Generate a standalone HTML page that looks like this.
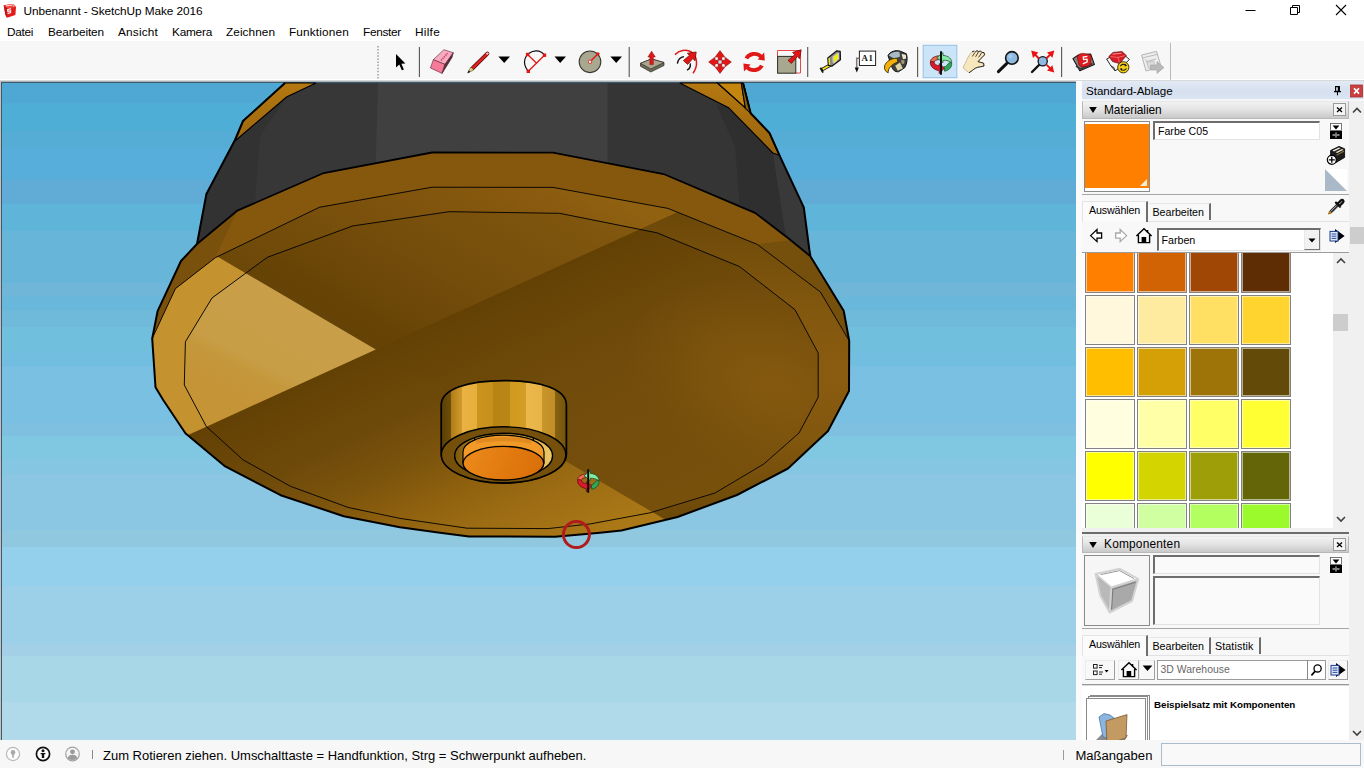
<!DOCTYPE html>
<html lang="de">
<head>
<meta charset="utf-8">
<title>Unbenannt - SketchUp Make 2016</title>
<style>
*{box-sizing:border-box;margin:0;padding:0}
html,body{width:1364px;height:768px;overflow:hidden;background:#fff}
body{position:relative;font-family:"Liberation Sans",sans-serif;font-size:12px;color:#000}
.abs{position:absolute}
.t{position:absolute;white-space:nowrap;line-height:1}
#titlebar{left:0;top:0;width:1364px;height:22px;background:#fff}
#menubar{left:0;top:22px;width:1364px;height:19px;background:#fff}
#toolbar{left:0;top:41px;width:1364px;height:40px;background:#f7f7f7;border-bottom:1px solid #d6d8d9;box-shadow:inset 0 -1px 0 #fff}
.m{top:5px;font-size:11.8px}
#viewport{left:0;top:81px;width:1076px;height:659px;background:#5f6a70;overflow:hidden}
#statusbar{left:0;top:740px;width:1364px;height:28px;background:#f7f7f7}
#side{left:1076px;top:81px;width:288px;height:659px;background:#f4f4f4;overflow:hidden}
.hdr{position:absolute;left:6px;width:267px;height:17px;background:linear-gradient(#f2f2f2,#e4e4e4 45%,#c9c9c9);border:1px solid #b8b8b8;border-top-color:#e8e8e8}
.fld{position:absolute;background:#fff;border:1px solid #e3e3e3;border-top:2px solid #6d6d6d;border-left:2px solid #6d6d6d}
.sw{position:absolute;width:50px;height:50px;border:1px solid #828282;box-shadow:inset 0 0 0 1px rgba(255,255,255,.55)}
.tab{position:absolute;font-size:10.6px;white-space:nowrap}
</style>
</head>
<body>
<div id="titlebar" class="abs">
<svg class="abs" style="left:3px;top:3px" width="17" height="17" viewBox="0 0 17 17">
<path d="M0.7 2.3 L9.8 1 L13 4 L12.4 12 L4 14.8 L2.3 11.5 Z" fill="#e21a1a"/>
<path d="M0.7 2.3 L9.8 1 L13 4 L4.4 5.4 Z" fill="#f04a44"/>
<path d="M0.7 2.3 L4.4 5.4 L4 14.8 L2.3 11.5 Z" fill="#c41212"/>
<path d="M3 2.9 L9.4 2 L11 3.5" stroke="#fff" stroke-width="0.9" fill="none" opacity=".85"/>
<path d="M8.2 5.6 L4.6 6.6 L4.8 8.4 L7.6 7.8 L7.6 9.6 L4.6 10.6" stroke="#fff" stroke-width="1.2" fill="none" opacity=".9"/>
</svg>
<span class="t" style="left:23.5px;top:5.5px;font-size:11.8px;letter-spacing:-0.07px">Unbenannt - SketchUp Make 2016</span>
<svg class="abs" style="left:1240px;top:0" width="124" height="22" viewBox="0 0 124 22">
<path d="M5.5 10.5 H15.5" stroke="#000" stroke-width="1" fill="none"/>
<path d="M50.5 7.5 H57.5 V14.5 H50.5 Z M52.5 7.5 V5.5 H59.5 V12.5 H57.5" stroke="#000" stroke-width="1" fill="none"/>
<path d="M96 5 L106 15 M106 5 L96 15" stroke="#000" stroke-width="1.1" fill="none"/>
</svg>
</div>

<div id="menubar" class="abs">
<span class="t m" style="left:7px;letter-spacing:-0.31px">Datei</span>
<span class="t m" style="left:48px;letter-spacing:-0.11px">Bearbeiten</span>
<span class="t m" style="left:118px;letter-spacing:0.19px">Ansicht</span>
<span class="t m" style="left:172px;letter-spacing:-0.22px">Kamera</span>
<span class="t m" style="left:226px;letter-spacing:0.06px">Zeichnen</span>
<span class="t m" style="left:289px;letter-spacing:0.16px">Funktionen</span>
<span class="t m" style="left:363px;letter-spacing:-0.29px">Fenster</span>
<span class="t m" style="left:415px;letter-spacing:0.28px">Hilfe</span>
</div>

<div id="toolbar" class="abs">
<svg class="abs" style="left:0;top:0" width="1364" height="40" viewBox="0 41 1364 40">
<!-- toolbar frame -->
<path d="M378 46 V79" stroke="#b4b4b4" stroke-width="2" stroke-dasharray="1.5 1.6" fill="none"/>
<path d="M1170.5 43 V80" stroke="#b9b9b9" stroke-width="1" fill="none"/>
<g stroke="#555" stroke-width="1.1" fill="none">
<path d="M419.4 47 V77"/><path d="M629.2 47 V77"/><path d="M807.7 47 V77"/><path d="M917.6 47 V77"/><path d="M1061.6 47 V77"/>
</g>
<!-- select -->
<path d="M396 54 V67.6 L399.3 64.6 L401.8 70.3 L403.9 69.4 L401.4 63.8 L405.4 63.6 Z" fill="#000"/>
<!-- eraser -->
<g stroke="#5a2030" stroke-width="0.6" stroke-linejoin="round">
<path d="M433.3 59.7 L443.9 49.7 L453.3 52.7 L445 64.4 Z" fill="#f9a9c0"/>
<path d="M433.3 59.7 L445 64.4 L442.1 73.4 L430.4 68 Z" fill="#f67a99"/>
<path d="M445 64.4 L453.3 52.7 L452 57.6 L442.1 73.4 Z" fill="#4a3038"/>
</g>
<path d="M441 60.5 L447.6 53.2" stroke="#c04a6c" stroke-width="1.6" stroke-dasharray="1.4 0.8" fill="none"/>
<!-- pencil -->
<path d="M472.8 68 L487.4 53.6" stroke="#4a1010" stroke-width="4" stroke-linecap="round" fill="none"/>
<path d="M472.8 68 L487.4 53.6" stroke="#e02020" stroke-width="2.5" stroke-linecap="round" fill="none"/>
<circle cx="487.4" cy="53.6" r="1.2" fill="#f6c8c8"/>
<path d="M467.6 73 L470.8 67 L473.8 70 Z" fill="#e8d070" stroke="#333" stroke-width="0.5"/>
<path d="M467.6 73 L468.7 70.3 L470.3 71.9 Z" fill="#111"/>
<!-- dropdown arrows -->
<path d="M498.4 56.5 H510 L504.2 63 Z M554.5 56.5 H566 L560.2 63 Z M610.4 56.5 H622 L616.2 63 Z" fill="#000"/>
<!-- arc -->
<path d="M528.3 71.3 C521.5 63 524 52.5 535.7 50.9 C539.5 50.6 542.6 52.6 544.5 55.2" stroke="#111" stroke-width="1.2" fill="none"/>
<path d="M528.3 71.3 L544.5 55.2 M527.6 54.5 L536.6 63.3" stroke="#e01818" stroke-width="1.3" fill="none"/>
<g fill="#e01818"><rect x="526.6" y="69.6" width="3.4" height="3.4"/><rect x="542.8" y="53.5" width="3.4" height="3.4"/><rect x="525.9" y="52.8" width="3.4" height="3.4"/></g>
<!-- circle -->
<circle cx="590" cy="61.8" r="10.8" fill="#a9a78f" stroke="#3a3a32" stroke-width="1.1"/>
<path d="M590 61.8 L598 53.8" stroke="#e01818" stroke-width="1.4"/>
<circle cx="598" cy="53.8" r="1.6" fill="#e01818"/><circle cx="590" cy="61.8" r="1.7" fill="#fff" stroke="#e01818" stroke-width="0.8"/>
<!-- push/pull -->
<path d="M640.5 63.3 L651.5 58.9 L664 62.5 L664 65.5 L650.8 72 L640.5 66.3 Z" fill="#6d6c5c" stroke="#2c2c24" stroke-width="0.7"/>
<path d="M640.5 63.3 L651.5 58.9 L664 62.5 L650.8 69 Z" fill="#a9a78f" stroke="#2c2c24" stroke-width="0.7"/>
<path d="M649.9 64.6 V57 H647.9 L651.6 51.2 L655.3 57 H653.3 V64.6 Z" fill="#e01818" stroke="#8a0c0c" stroke-width="0.5"/>
<!-- follow me / offset -->
<path d="M675 54.6 C679 50.6 686 48.8 691.4 52 C697.4 56 698.4 66 693 73.2" stroke="#e01818" stroke-width="1.5" fill="none"/>
<path d="M677.4 63.6 C678 59.6 680.6 57 684 56.6 M690.2 63.4 C690.8 66.4 689.6 68.8 687 70.2" stroke="#111" stroke-width="1.4" fill="none"/>
<path d="M683.4 60.6 L689.4 55.4 L687.4 53.2 L696.2 52 L695 60.8 L692.8 58.6 L687.6 64.4 Z" fill="#e81414" stroke="#5a0808" stroke-width="0.7" stroke-linejoin="round"/>
<!-- move -->
<path d="M720 51 L731 62 L720 73 L709 62 Z" fill="#f6d2d2"/>
<g fill="#e81414" stroke="#6a0a0a" stroke-width="0.5" stroke-linejoin="round">
<path d="M720 50.6 L724.6 56.8 H721.8 V60.2 H718.2 V56.8 H715.4 Z"/>
<path d="M720 73.4 L715.4 67.2 H718.2 V63.8 H721.8 V67.2 H724.6 Z"/>
<path d="M708.6 62 L714.8 57.4 V60.2 H718.2 V63.8 H714.8 V66.6 Z"/>
<path d="M731.4 62 L725.2 66.6 V63.8 H721.8 V60.2 H725.2 V57.4 Z"/>
</g>
<rect x="718.6" y="60.6" width="2.8" height="2.8" fill="#c8d8e8"/>
<g fill="#fff"><rect x="716" y="58" width="1.6" height="1.6"/><rect x="722.4" y="58" width="1.6" height="1.6"/><rect x="716" y="64.4" width="1.6" height="1.6"/><rect x="722.4" y="64.4" width="1.6" height="1.6"/></g>
<!-- rotate -->
<g fill="none" stroke="#e01818" stroke-width="3.8">
<path d="M746.4 58.6 C748.6 53.6 756.4 52 761 56.6"/>
<path d="M761.8 65.4 C759.6 70.4 751.8 72 747.2 67.4"/>
</g>
<path d="M757.6 59.4 L764.8 60.6 L764.2 52.6 Z M750.6 64.6 L743.4 63.4 L744 71.4 Z" fill="#e01818"/>
<!-- scale -->
<path d="M777.5 56 V50.5 H800.5 V73 H796" stroke="#e84848" stroke-width="1" fill="none"/>
<rect x="777.6" y="56.4" width="18.2" height="16.8" fill="#a9a78f" stroke="#2c2c24" stroke-width="1"/>
<path d="M788 60.4 L794.8 54.8 L792.6 52.4 L801.2 49.8 L799.6 58.8 L797.4 56.6 L791.4 63.4 Z" fill="#e81414" stroke="#5a0808" stroke-width="0.7" stroke-linejoin="round"/>
<!-- tape measure -->
<path d="M821.4 70 L830.4 65" stroke="#111" stroke-width="3.6" stroke-linecap="butt"/>
<path d="M822.6 69.4 L830.4 65" stroke="#f2e020" stroke-width="2"/>
<path d="M820.4 67.8 L823 72.6" stroke="#111" stroke-width="1.8"/>
<path d="M827.8 58 L836.8 50.8 L840.2 51.4 L840.4 59.8 L831.8 66.2 L828.4 65.4 Z" fill="#8a8a82" stroke="#161616" stroke-width="1.3" stroke-linejoin="round"/>
<path d="M828.4 58.6 L829.8 57.6 L830.2 65 L828.8 64.8 Z" fill="#f2e020"/>
<path d="M832.4 56.8 L837.6 52.8 L839 53.2 L839 59 L834.2 63.4 L832.6 62.8 Z" fill="#c8c8c0"/>
<path d="M833.4 57 L837.8 53.8 L838.2 58.6 L834.4 62.4 Z" fill="#f0ec18"/>
<!-- text tool -->
<rect x="859.4" y="51.1" width="16.2" height="14.4" fill="#fff" stroke="#222" stroke-width="1"/>
<text x="861.6" y="61" font-family="Liberation Serif,serif" font-size="8.8" font-weight="bold" letter-spacing="0.5" fill="#111">A1</text>
<path d="M859.4 58.3 H856.7 V68" stroke="#7a7a7a" stroke-width="1.5" fill="none"/>
<path d="M854.7 67.6 H858.9 L856.8 72.6 Z" fill="#111"/>
<!-- paint bucket -->
<path d="M888 55.6 C889.6 51.6 896 49.6 900.4 51.2 L906.4 53.8 C907.8 58 907.2 63.6 904.8 67.6 L898.4 71.8 C895 72 892.6 69.8 891.6 66.4 Z" fill="#414141" stroke="#111" stroke-width="1"/>
<path d="M888.8 55.4 C890.8 52.2 896 51 899.4 52 L900 56.4 L894.6 58.8 Z" fill="#a9bcc6"/>
<path d="M895.2 65.8 L900 62.6 L902.8 68.6 L897.8 70.8 Z" fill="#ded6a4"/>
<path d="M901.6 54 L905.8 54.8 L906.2 58.4 L903 59.2 Z" fill="#ece8d0"/>
<path d="M901 60 L904.6 60.6 L904 64 L901.6 63.4 Z" fill="#a89c6c"/>
<path d="M897.2 58.2 C891 58.2 886 61.4 884.6 66 C884 69 885.4 71.8 888.2 72.8 C888 68.6 890.8 64.8 897.8 62 Z" fill="#f5b00a" stroke="#3a2c04" stroke-width="0.9"/>
<!-- orbit (active) -->
<rect x="923.2" y="45.3" width="33.6" height="32.4" fill="#cce4f7" stroke="#92c4ec" stroke-width="1"/>
<g transform="translate(941 63.4) scale(1.0) translate(-941 -63.4)"><path d="M930.4 62.2 C930.2 58.6 934.2 56.2 938.6 55.8 L938.8 59.6 C936.2 59.8 934.4 60.8 934.2 62.4 Z" fill="#ea6a52" stroke="#5a0a0a" stroke-width="0.7"/><path d="M943 52.6 L936.8 57.8 L943 62.6 L943 60.2 C946.6 60.2 949.8 61 951.6 62.8 C952.2 59.4 948.6 55.6 943 55.4 Z" fill="#86eaa6" stroke="#0c4a20" stroke-width="0.7"/><path d="M930.4 62.2 C930 66.6 934 69.8 939.2 70.8 L939.2 73.6 L944.6 68 L939.2 63.6 L939.2 65.8 C936.6 65.4 934.4 64.2 934.2 62.4 C932.8 61.2 931.4 61.4 930.4 62.2 Z" fill="#d81a2c" stroke="#5a0a0a" stroke-width="0.7"/><path d="M951.6 62.8 C952.4 67 949 70.4 944.6 71.2 L944.2 66.8 C946.2 66.4 947.6 65.4 947.8 64 C949 62.6 950.6 62.2 951.6 62.8 Z" fill="#2ea858" stroke="#0c4a20" stroke-width="0.7"/><path d="M941 51.2 V74.8" stroke="#0a0a0a" stroke-width="1.9"/></g>
<!-- pan hand -->
<path d="M963 67.8 L966.6 60.6 C967.8 57.2 969.8 53.8 972 51.8 L974.2 51 L975.2 52 L977 50.6 L978.6 51.6 L980.6 51 L981.8 52.4 L984 52.6 L984.6 54.8 L978 61.6 L980 62.2 L983.6 63.2 L984 66 L980.4 66.8 C976.4 67.2 974.4 68.6 972.4 70.4 L969 72.8 Z" fill="#f7e7bc" stroke="#b09a70" stroke-width="0.6" stroke-linejoin="round"/>
<path d="M972 51.8 L974.2 51 M975.2 52 L977 50.6 L978.6 51.6 L980.6 51 L981.8 52.4 L984 52.6 L984.6 54.8 L978 61.6 L980 62.2 L983.6 63.2 L984 66 L980.4 66.8 C976.4 67.2 974.4 68.6 972.4 70.4 L969 72.8" fill="none" stroke="#1c1c1c" stroke-width="0.9" stroke-linejoin="round"/>
<path d="M975 52.4 L972.4 56.4 M978.4 52 L975.6 56.8 M981.6 52.8 L978.6 57.4" stroke="#1c1c1c" stroke-width="0.8" fill="none"/>
<!-- zoom -->
<path d="M998.4 71.6 L1006.6 63.6" stroke="#111" stroke-width="3" stroke-linecap="round"/>
<circle cx="1011.9" cy="57.9" r="6.3" fill="#8fbbe2" stroke="#141414" stroke-width="1.6"/>
<circle cx="1010.4" cy="56.2" r="2" fill="#a8cdec"/>
<!-- zoom extents -->
<path d="M1032 72 L1039 65" stroke="#111" stroke-width="2.4" stroke-linecap="round"/>
<circle cx="1042.7" cy="61.2" r="4.6" fill="#8fbbe2" stroke="#141414" stroke-width="1.3"/>
<g fill="#e81414">
<path d="M1031.2 50.6 L1038.4 52.6 L1036.4 54.6 L1039.6 57.8 L1038.2 59.2 L1035 56 L1033 58 Z"/>
<path d="M1054.4 50.6 L1052.4 57.8 L1050.4 55.8 L1047.2 59 L1045.8 57.6 L1049 54.4 L1047 52.4 Z"/>
<path d="M1054.2 72.6 L1047 70.6 L1049 68.6 L1046 65.6 L1047.4 64.2 L1050.4 67.2 L1052.4 65.2 Z"/>
</g>
<!-- 3D warehouse -->
<path d="M1072.9 58.6 L1078.4 55 L1090.6 54 L1094.4 64.4 L1079.8 70.8 Z" fill="#8a867e" stroke="#141414" stroke-width="1.1" stroke-linejoin="round"/>
<path d="M1076 66 L1080.6 69 L1092.6 63.6" stroke="#3a3a3a" stroke-width="1.6" fill="none"/>
<path d="M1077.2 57 C1078 54.4 1080.4 53.2 1083 53.4 L1088.6 54.2 C1090.4 54.6 1091.4 56.2 1091.2 58 L1090.6 63.2 C1090.2 64.8 1089 65.8 1087.4 66.2 L1082.6 67 C1080.8 67 1079.4 66 1078.8 64.4 Z" fill="#dc1c20" stroke="#6a0c0c" stroke-width="0.6"/>
<path d="M1087.4 56.4 L1083.2 57 L1083.6 59.6 L1087 59.2 L1087.2 61.8 L1082.8 63.8" stroke="#fff" stroke-width="1.3" fill="none"/>
<!-- extension warehouse -->
<path d="M1106.6 59 L1112.6 56 L1125 55.6 L1129.4 59.4 L1123 66 L1115 70.8 L1111 66 Z" fill="#f6f6f6" stroke="#141414" stroke-width="0.9" stroke-linejoin="round"/>
<path d="M1111 66 L1114 67.6 L1115 70.8" stroke="#141414" stroke-width="0.8" fill="none"/>
<path d="M1108.8 56.4 L1113 52.4 L1122 51.6 L1126.4 55.6 L1119.6 63.6 L1112.6 61.6 Z" fill="#d81c24" stroke="#5a0a0a" stroke-width="0.7"/>
<path d="M1110.4 56.6 L1118 57.4 L1125 55.6 M1118 57.4 L1119.4 62.6" stroke="#f58a8a" stroke-width="0.7" fill="none"/>
<path d="M1112.6 54.2 L1121.6 53.2" stroke="#f8b0b0" stroke-width="0.8"/>
<circle cx="1123.3" cy="67.3" r="5.6" fill="#f6d018" stroke="#2a2200" stroke-width="0.9"/>
<path d="M1120.4 66.2 C1121.2 64.2 1124.4 63.8 1125.8 65.2 M1126.4 68.4 C1125.6 70.4 1122.4 70.8 1121 69.4" stroke="#222" stroke-width="1.2" fill="none"/>
<path d="M1125 63.8 L1127.2 65.8 L1124.6 66.6 Z M1121.8 70.8 L1119.6 68.8 L1122.2 68 Z" fill="#222"/>
<!-- extension manager (disabled) -->
<path d="M1141.6 55 L1156.6 51.4 L1161 66.4 L1146 71 Z" fill="#ededed" stroke="#b4b4b4" stroke-width="1"/>
<path d="M1143 57.8 L1157.2 54.4 M1145.6 59.4 L1150.4 69.2 M1147 61.4 L1156 59" stroke="#bcbcbc" stroke-width="1" fill="none"/>
<rect x="1147.6" y="61.6" width="7" height="6" fill="#dcdcdc" stroke="#bcbcbc" stroke-width="0.7" transform="rotate(-14 1151 64.6)"/>
<path d="M1150.6 65 H1157 V61.6 L1164 67.6 L1157 73.4 V70 H1150.6 Z" fill="#b9b9b9" stroke="#a2a2a2" stroke-width="0.6"/>
</svg>
</div>

<div id="viewport" class="abs">
<svg class="abs" style="left:0;top:0" width="1076" height="659" viewBox="0 81 1076 659">
<defs>
<linearGradient id="sky" x1="0" y1="83" x2="0" y2="740" gradientUnits="userSpaceOnUse"><stop offset="0.0000" stop-color="#4fa7d3"/><stop offset="0.0306" stop-color="#4fa7d3"/><stop offset="0.0314" stop-color="#4eaed5"/><stop offset="0.0723" stop-color="#4eaed5"/><stop offset="0.0731" stop-color="#55add6"/><stop offset="0.0974" stop-color="#55add6"/><stop offset="0.0982" stop-color="#58aedb"/><stop offset="0.1464" stop-color="#58aedb"/><stop offset="0.1472" stop-color="#61acd7"/><stop offset="0.1834" stop-color="#61acd7"/><stop offset="0.1842" stop-color="#5fb5d9"/><stop offset="0.2245" stop-color="#5fb5d9"/><stop offset="0.2253" stop-color="#67b6da"/><stop offset="0.3036" stop-color="#67b6da"/><stop offset="0.3044" stop-color="#70b6d9"/><stop offset="0.3243" stop-color="#70b6d9"/><stop offset="0.3251" stop-color="#69b8dc"/><stop offset="0.3459" stop-color="#69b8dc"/><stop offset="0.3467" stop-color="#6fb9db"/><stop offset="0.3706" stop-color="#6fb9db"/><stop offset="0.3714" stop-color="#70bfdd"/><stop offset="0.4080" stop-color="#70bfdd"/><stop offset="0.4088" stop-color="#72bee0"/><stop offset="0.4309" stop-color="#72bee0"/><stop offset="0.4317" stop-color="#79c0e2"/><stop offset="0.5167" stop-color="#79c0e2"/><stop offset="0.5175" stop-color="#7fbfe0"/><stop offset="0.5365" stop-color="#7fbfe0"/><stop offset="0.5373" stop-color="#80c7e1"/><stop offset="0.5721" stop-color="#80c7e1"/><stop offset="0.5729" stop-color="#85c6e2"/><stop offset="0.5951" stop-color="#85c6e2"/><stop offset="0.5959" stop-color="#8bc6e2"/><stop offset="0.6796" stop-color="#8bc6e2"/><stop offset="0.6804" stop-color="#90c8df"/><stop offset="0.7062" stop-color="#90c8df"/><stop offset="0.7070" stop-color="#94cfeb"/><stop offset="0.7648" stop-color="#94cfeb"/><stop offset="0.7656" stop-color="#9bd0e8"/><stop offset="0.8531" stop-color="#9bd0e8"/><stop offset="0.8539" stop-color="#a3d0e6"/><stop offset="0.8713" stop-color="#a3d0e6"/><stop offset="0.8721" stop-color="#a8d7e8"/><stop offset="0.9414" stop-color="#a8d7e8"/><stop offset="0.9422" stop-color="#b0d9ea"/><stop offset="0.9992" stop-color="#b0d9ea"/></linearGradient>
<linearGradient id="gT" x1="376" y1="350" x2="507.7" y2="125.8" gradientUnits="userSpaceOnUse"><stop offset="0" stop-color="#654205"/><stop offset="0.1" stop-color="#674406"/><stop offset="0.41" stop-color="#754d0b"/><stop offset="0.83" stop-color="#80560e"/><stop offset="0.93" stop-color="#85590f"/><stop offset="1" stop-color="#875b10"/></linearGradient>
<linearGradient id="gR" x1="376" y1="350" x2="483.6" y2="586.6" gradientUnits="userSpaceOnUse"><stop offset="0" stop-color="#634105"/><stop offset="0.14" stop-color="#684507"/><stop offset="0.28" stop-color="#6d4909"/><stop offset="0.5" stop-color="#724c0b"/><stop offset="1" stop-color="#77500c"/></linearGradient>
<radialGradient id="gRb" cx="775" cy="385" r="125" gradientUnits="userSpaceOnUse" gradientTransform="translate(775 385) rotate(20) scale(1.25 0.8) translate(-775 -385)"><stop offset="0" stop-color="#86590f" stop-opacity="0.95"/><stop offset="0.5" stop-color="#82570e" stop-opacity="0.6"/><stop offset="1" stop-color="#7a520c" stop-opacity="0"/></radialGradient>
<linearGradient id="gRingT" x1="376" y1="350" x2="507.7" y2="125.8" gradientUnits="userSpaceOnUse"><stop offset="0" stop-color="#6c4808"/><stop offset="0.4" stop-color="#7a500c"/><stop offset="0.8" stop-color="#895a0f"/><stop offset="1" stop-color="#906210"/></linearGradient>
<linearGradient id="gRingR" x1="0" y1="215" x2="0" y2="525" gradientUnits="userSpaceOnUse"><stop offset="0" stop-color="#6c4808"/><stop offset="0.27" stop-color="#80560e"/><stop offset="0.5" stop-color="#8a5c10"/><stop offset="0.72" stop-color="#82570e"/><stop offset="1" stop-color="#6a4708"/></linearGradient>
<linearGradient id="gB" x1="376" y1="350" x2="483.6" y2="586.6" gradientUnits="userSpaceOnUse"><stop offset="0" stop-color="#634105"/><stop offset="0.14" stop-color="#694607"/><stop offset="0.28" stop-color="#6e4a0a"/><stop offset="0.45" stop-color="#7b530c"/><stop offset="0.63" stop-color="#90620f"/><stop offset="0.77" stop-color="#9c6c14"/><stop offset="1" stop-color="#aa7816"/></linearGradient>
<linearGradient id="gL" x1="220" y1="400" x2="260" y2="320" gradientUnits="userSpaceOnUse"><stop offset="0" stop-color="#c49436"/><stop offset="0.42" stop-color="#c5973b"/><stop offset="0.58" stop-color="#c79d46"/><stop offset="1" stop-color="#c89e48"/></linearGradient>
<clipPath id="cBF"><polygon points="152.2,338.5 175.4,288.7 215.3,257.7 319.3,207.3 432.0,187.2 553.0,187.4 668.0,208.4 757.3,244.4 820.4,292.0 849.2,340.7 849.0,391.0 828.0,431.0 788.0,468.5 737.0,495.0 677.5,517.0 621.4,530.5 600.0,532.7 555.0,536.8 469.0,536.4 440.0,532.8 400.0,527.2 343.7,516.2 280.6,495.2 225.2,466.4 185.4,433.2 163.2,400.0 155.5,387.2 152.2,338.5"/></clipPath>
<clipPath id="cL2"><polygon points="185.4,341.8 212.0,298.0 267.3,257.3 352.5,226.0 449.0,211.7 559.5,213.3 657.0,232.8 739.6,266.6 795.0,309.7 818.2,353.0 818.2,397.2 799.0,433.0 763.8,464.0 715.0,493.0 650.0,512.8 590.4,523.9 548.0,528.6 467.0,528.2 400.0,518.4 348.0,507.4 290.5,486.3 243.0,459.8 206.4,426.6 184.3,385.0"/></clipPath>
<linearGradient id="gCyl" x1="441" y1="0" x2="566" y2="0" gradientUnits="userSpaceOnUse">
<stop offset="0.0000" stop-color="#8a6a18"/>
<stop offset="0.0120" stop-color="#8a6a18"/>
<stop offset="0.0120" stop-color="#5c4006"/>
<stop offset="0.0800" stop-color="#6e4e0a"/>
<stop offset="0.0800" stop-color="#b07c16"/>
<stop offset="0.1720" stop-color="#d09c30"/>
<stop offset="0.1720" stop-color="#e9b242"/>
<stop offset="0.2880" stop-color="#e6ae3c"/>
<stop offset="0.2880" stop-color="#ca941e"/>
<stop offset="0.4200" stop-color="#c6901a"/>
<stop offset="0.4200" stop-color="#b88414"/>
<stop offset="0.5560" stop-color="#ba8616"/>
<stop offset="0.5560" stop-color="#d09a20"/>
<stop offset="0.6800" stop-color="#d49e26"/>
<stop offset="0.6800" stop-color="#ebb84c"/>
<stop offset="0.8080" stop-color="#e8b448"/>
<stop offset="0.8080" stop-color="#c8962c"/>
<stop offset="0.9120" stop-color="#c08e26"/>
<stop offset="0.9120" stop-color="#866212"/>
<stop offset="1.0000" stop-color="#74540c"/>
</linearGradient>
</defs>
<rect x="0" y="81" width="1076" height="659" fill="#3e5a6e"/>
<rect x="0" y="81" width="1076" height="1" fill="#aab2b6"/>
<rect x="0" y="81" width="1" height="659" fill="#c4c0c0"/>
<rect x="2" y="83" width="1074" height="657" fill="url(#sky)"/>
<polygon points="197.0,244.0 181.0,261.0 157.7,310.8 152.2,338.5 155.5,387.2 163.2,400.0 185.4,433.2 225.2,466.4 280.6,495.2 343.7,516.2 400.0,527.2 440.0,532.8 469.0,536.4 555.0,536.8 600.0,532.7 621.4,530.5 677.5,517.0 737.0,495.0 788.0,468.5 828.0,431.0 849.0,391.0 849.2,340.7 843.7,310.8 810.5,256.6 810.0,256.0 790.5,240.0 755.0,212.8 663.6,174.0 553.0,152.6 432.0,152.5 323.7,173.0 237.4,210.6 197.0,244.0" fill="#86580e"/>
<g clip-path="url(#cBF)">
<rect x="100" y="80" width="900" height="700" fill="url(#gB)"/>
<polygon points="375.8,349.6 100.0,187.6 100.0,0.0 1000.0,0.0 1000.0,65.6" fill="url(#gRingT)"/>
<polygon points="375.8,349.6 1000.0,65.6 1000.0,716.3" fill="url(#gRingR)"/>
<polygon points="375.8,349.6 100.0,187.6 100.0,475.1" fill="#c4922e"/>
</g>
<g clip-path="url(#cL2)">
<rect x="100" y="80" width="900" height="700" fill="url(#gB)"/>
<polygon points="375.8,349.6 100.0,187.6 100.0,0.0 1000.0,0.0 1000.0,65.6" fill="url(#gT)"/>
<polygon points="375.8,349.6 1000.0,65.6 1000.0,716.3" fill="url(#gR)"/>
<polygon points="375.8,349.6 1000.0,65.6 1000.0,716.3" fill="url(#gRb)"/>
<polygon points="375.8,349.6 100.0,187.6 100.0,475.1" fill="url(#gL)"/>
</g>
<polygon points="810.5,256.6 843.7,310.8 849.2,340.7 820.4,292.0 757.3,244.4 790.5,240.0 810.0,256.0" fill="#74500c"/>
<polygon points="197.0,244.0 181.0,261.0 157.7,310.8 152.2,338.5 175.4,288.7 215.3,257.7 237.4,210.6" fill="#7a510c"/>
<polygon points="316.0,83.0 679.8,83.0 728.6,107.7 772.8,153.0 779.5,155.3 803.8,207.3 810.0,256.0 790.5,240.0 755.0,212.8 663.6,174.0 553.0,152.6 432.0,152.5 323.7,173.0 237.4,210.6 197.0,244.0 206.4,194.0 235.0,141.0 286.5,97.0" fill="#404040"/>
<polygon points="316.0,83.0 378.0,83.0 375.8,162.0 323.7,173.0 237.4,210.6 197.0,244.0 206.4,194.0 235.0,141.0 286.5,97.0" fill="#373737"/>
<polygon points="286.5,97.0 260.0,136.5 255.0,201.0 237.4,210.6 197.0,244.0 206.4,194.0 235.0,141.0" fill="#323232"/>
<polygon points="607.6,83.0 679.8,83.0 728.6,107.7 772.8,153.0 779.5,155.3 803.8,207.3 810.0,256.0 790.5,240.0 755.0,212.8 663.6,174.0 607.6,163.0" fill="#353535"/>
<polygon points="716.4,104.4 728.6,107.7 772.8,153.0 779.5,155.3 803.8,207.3 810.0,256.0 790.5,240.0 755.0,212.8 739.6,204.0 735.0,146.4" fill="#2f2f2f"/>
<polygon points="772.8,153.0 779.5,155.3 803.8,207.3 810.0,256.0 790.5,240.0 785.0,232.0" fill="#393939"/>
<linearGradient id="gRim" x1="0" y1="83" x2="0" y2="155" gradientUnits="userSpaceOnUse"><stop offset="0" stop-color="#b47810"/><stop offset="0.5" stop-color="#a66e0f"/><stop offset="1" stop-color="#96640f"/></linearGradient>
<polygon points="285.0,83.0 316.0,83.0 286.5,97.0 235.0,141.0 243.0,121.0" fill="url(#gRim)" stroke="#000" stroke-width="1.2"/>
<polygon points="679.8,83.0 717.5,83.0 744.0,106.6 750.7,113.2 769.5,133.0 779.5,155.3 772.8,153.0 728.6,107.7" fill="url(#gRim)" stroke="#000" stroke-width="1.2"/>
<polygon points="717.5,83.0 741.3,83.0 745.4,108.2 744.0,106.6" fill="#c4860f" stroke="#000" stroke-width="1.2"/>
<polygon points="741.3,83.0 743.4,83.0 750.9,113.4 745.4,108.2" fill="#8a5c10" stroke="#000" stroke-width="1"/>
<polyline points="152.2,338.5 175.4,288.7 215.3,257.7 319.3,207.3 432.0,187.2 553.0,187.4 668.0,208.4 757.3,244.4 820.4,292.0 849.2,340.7" fill="none" stroke="#000" stroke-width="0.9"/>
<polygon points="185.4,341.8 212.0,298.0 267.3,257.3 352.5,226.0 449.0,211.7 559.5,213.3 657.0,232.8 739.6,266.6 795.0,309.7 818.2,353.0 818.2,397.2 799.0,433.0 763.8,464.0 715.0,493.0 650.0,512.8 590.4,523.9 548.0,528.6 467.0,528.2 400.0,518.4 348.0,507.4 290.5,486.3 243.0,459.8 206.4,426.6 184.3,385.0" fill="none" stroke="#000" stroke-width="0.9"/>
<polyline points="810.0,256.0 790.5,240.0 755.0,212.8 663.6,174.0 553.0,152.6 432.0,152.5 323.7,173.0 237.4,210.6 197.0,244.0" fill="none" stroke="#000" stroke-width="1.8"/>
<polyline points="285.0,83.0 243.0,121.0 235.0,140.0 206.4,194.0 197.0,244.0 181.0,261.0 157.7,310.8 152.2,338.5 155.5,387.2 163.2,400.0 185.4,433.2 225.2,466.4 280.6,495.2 343.7,516.2 400.0,527.2 440.0,532.8 469.0,536.4 555.0,536.8 600.0,532.7 621.4,530.5 677.5,517.0 737.0,495.0 788.0,468.5 828.0,431.0 849.0,391.0 849.2,340.7 843.7,310.8 810.5,256.6 809.4,250.0 803.8,207.3 779.5,155.3 769.5,133.0 750.7,113.2 743.0,83.0" fill="none" stroke="#000" stroke-width="2" stroke-linejoin="round"/>
<clipPath id="cHole"><ellipse cx="503.6" cy="455.8" rx="49" ry="22.6"/></clipPath>
<linearGradient id="gDisc" x1="470" y1="446" x2="540" y2="480" gradientUnits="userSpaceOnUse"><stop offset="0" stop-color="#ea8a1a"/><stop offset="0.5" stop-color="#e27a10"/><stop offset="1" stop-color="#d86e08"/></linearGradient>
<linearGradient id="gWall" x1="455" y1="0" x2="553" y2="0" gradientUnits="userSpaceOnUse"><stop offset="0" stop-color="#7a560c"/><stop offset="0.22" stop-color="#b88a24"/><stop offset="0.5" stop-color="#d0a030"/><stop offset="0.8" stop-color="#e4b850"/><stop offset="1" stop-color="#ecc868"/></linearGradient>
<path d="M441.2 405 C441.2 389 468 380.6 504 380.6 C540 380.6 566.4 389 566.4 405 V454 C566.4 470 538 483.2 503.5 483.2 C469 483.2 441.2 470 441.2 454 Z" fill="url(#gCyl)" stroke="#000" stroke-width="1.7"/>
<ellipse cx="503.6" cy="454.8" rx="62.2" ry="28" fill="#75500a" stroke="#000" stroke-width="1.4"/>
<ellipse cx="503.6" cy="455.8" rx="49" ry="22.6" fill="url(#gWall)"/>
<g clip-path="url(#cHole)">
<path d="M474.6 430 V446 M533.4 430 V446" stroke="#000" stroke-width="1.2"/>
<path d="M463 463 V452 C463 442 481 435.2 503.6 435.2 C526 435.2 544 442 544 452 V463 Z" fill="#f29a28" stroke="#000" stroke-width="1.2"/>
<path d="M476 440 C490 436.4 516 436.4 531 440 L531 444 C516 440.4 490 440.4 476 444 Z" fill="#e08a20"/>
</g>
<ellipse cx="503.6" cy="455.8" rx="49" ry="22.6" fill="none" stroke="#000" stroke-width="1.4"/>
<ellipse cx="503.4" cy="463.2" rx="40.4" ry="16.8" fill="url(#gDisc)" stroke="#000" stroke-width="1.4"/>
<g transform="translate(588.2 481.4) scale(1.0) translate(-941 -63.4)"><path d="M930.4 62.2 C930.2 58.6 934.2 56.2 938.6 55.8 L938.8 59.6 C936.2 59.8 934.4 60.8 934.2 62.4 Z" fill="#ea6a52" stroke="#5a0a0a" stroke-width="0.7"/><path d="M943 52.6 L936.8 57.8 L943 62.6 L943 60.2 C946.6 60.2 949.8 61 951.6 62.8 C952.2 59.4 948.6 55.6 943 55.4 Z" fill="#86eaa6" stroke="#0c4a20" stroke-width="0.7"/><path d="M930.4 62.2 C930 66.6 934 69.8 939.2 70.8 L939.2 73.6 L944.6 68 L939.2 63.6 L939.2 65.8 C936.6 65.4 934.4 64.2 934.2 62.4 C932.8 61.2 931.4 61.4 930.4 62.2 Z" fill="#d81a2c" stroke="#5a0a0a" stroke-width="0.7"/><path d="M951.6 62.8 C952.4 67 949 70.4 944.6 71.2 L944.2 66.8 C946.2 66.4 947.6 65.4 947.8 64 C949 62.6 950.6 62.2 951.6 62.8 Z" fill="#2ea858" stroke="#0c4a20" stroke-width="0.7"/><path d="M941 51.2 V74.8" stroke="#0a0a0a" stroke-width="1.9"/></g>
<circle cx="576.4" cy="534.6" r="13" fill="none" stroke="#b01c1c" stroke-width="3"/>
</svg>
</div>

<div id="side" class="abs">
<div class="abs" style="left:0;top:0;width:6px;height:659px;background:#fbfbfb"></div>
<div class="abs" style="left:6px;top:0;width:282px;height:20px;background:#f4f6fa"></div>
<div class="abs" style="left:6px;top:0;width:282px;height:18px;background:linear-gradient(#e3eaf5,#d6e0ef 55%,#dbe4f1)"></div>
<span class="t" style="left:10px;top:4px;font-size:11.6px;letter-spacing:-0.03px">Standard-Ablage</span>
<svg class="abs" style="left:256px;top:3px" width="32" height="14" viewBox="0 0 32 14"><path d="M3.6 2.6 H7.4 V7.4 H3.6 Z M2 7.6 H9 M5.5 7.6 V11.2" stroke="#000" stroke-width="1.1" fill="none"/><path d="M6.4 2.6 V7.4" stroke="#000" stroke-width="1.2"/><rect x="18.5" y="1" width="12" height="12" fill="#c9403f" stroke="#a83030" stroke-width="0.8"/><path d="M22 4.2 L27 9.6 M27 4.2 L22 9.6" stroke="#fff" stroke-width="1.6"/></svg>
<div class="abs" style="left:6px;top:20px;width:267px;height:639px;background:#f8f8f8"></div>
<div class="abs" style="left:273px;top:20px;width:15px;height:639px;background:#f0f0f0"></div>
<div class="abs" style="left:274px;top:146px;width:14px;height:17px;background:#cdcdcd"></div>
<svg class="abs" style="left:273px;top:20px" width="15" height="639" viewBox="0 0 15 639"><path d="M4 11.5 L8 7.5 L12 11.5" stroke="#404040" stroke-width="1.6" fill="none"/><path d="M4 630 L8 634 L12 630" stroke="#404040" stroke-width="1.6" fill="none"/></svg>
<div class="hdr" style="top:20px;height:18px"></div>
<svg class="abs" style="left:12px;top:25px" width="10" height="8" viewBox="0 0 10 8"><path d="M1.2 1 H8.8 L5 7 Z" fill="#000"/></svg>
<span class="t" style="left:28px;top:24px;font-size:11.9px;letter-spacing:-0.05px">Materialien</span>
<div class="abs" style="left:257px;top:22px;width:13px;height:13px;background:#f4f4f4;border:1px solid #9a9a9a"></div>
<svg class="abs" style="left:257px;top:22px" width="13" height="13" viewBox="0 0 13 13"><path d="M4 4.5 L9 9 M9 4.5 L4 9" stroke="#000" stroke-width="1.3"/></svg>
<div class="abs" style="left:8px;top:40px;width:66px;height:71px;background:#fff;border:1px solid #8a8a8a"></div>
<div class="abs" style="left:9px;top:43px;width:64px;height:64px;background:#ff7f00"></div>
<svg class="abs" style="left:63px;top:97px" width="9" height="9" viewBox="0 0 9 9"><path d="M8 1 V8 H1 Z" fill="#f4ecd8"/></svg>
<div class="fld" style="left:77px;top:40px;width:167px;height:19px"></div>
<span class="t" style="left:82px;top:45px;font-size:10.6px">Farbe C05</span>
<svg class="abs" style="left:254px;top:42px" width="12" height="16" viewBox="0 0 12 16"><rect x="0.5" y="0.5" width="11" height="7" fill="#fff" stroke="#555" stroke-width="0.8"/><path d="M2.6 2.4 H9.4 L6 6.4 Z" fill="#000"/><rect x="0" y="8" width="12" height="8" fill="#000"/><path d="M2.5 12 H9.5 M6 9.6 V10.8 M6 13.2 V14.4" stroke="#fff" stroke-width="1.1"/></svg>
<svg class="abs" style="left:250px;top:64px" width="20" height="21" viewBox="0 0 20 21"><path d="M4.6 5.4 L13 1.4 L18.6 3.8 L18.6 12.4 L10 17.6 L4.6 14.6 Z" fill="#1c1c1c" stroke="#000" stroke-width="0.8"/><path d="M6.4 5.6 L13 2.6 L14.6 3.3 L8 6.5 Z M9.6 7.2 L16 4 L17.6 4.7 L11.2 8 Z" fill="#e8e4d0"/><path d="M10.6 9.6 L18 5.6 V6.8 L10.6 10.8 Z" fill="#8a7a40"/><circle cx="5.8" cy="14.8" r="4.5" fill="#fff" stroke="#000" stroke-width="1.2"/><path d="M5.8 11.8 V17.8 M2.8 14.8 H8.8" stroke="#000" stroke-width="1.3"/></svg>
<svg class="abs" style="left:249px;top:88px" width="22" height="22" viewBox="0 0 22 22"><rect width="22" height="22" fill="#fff"/><path d="M0 0 L22 22 H0 Z" fill="#a9b9c8"/></svg>
<div class="abs" style="left:6px;top:113px;width:267px;height:1px;background:#a6a6a6"></div>
<div class="abs" style="left:6px;top:140px;width:267px;height:1px;background:#e2e2e2"></div>
<div class="abs" style="left:6px;top:120px;width:66px;height:21px;background:#fbfbfb;border:1px solid #e4e4e4;border-right:2px solid #6e6e6e;border-bottom:none"></div>
<span class="t" style="left:13px;top:124px;font-size:10.7px;letter-spacing:-0.14px">Auswählen</span>
<div class="abs" style="left:73px;top:122px;width:61.5px;height:17px;border-right:2px solid #6e6e6e;border-top:1px solid #e6e6e6"></div>
<span class="t" style="left:76.4px;top:126px;font-size:10.7px;letter-spacing:-0.01px">Bearbeiten</span>
<svg class="abs" style="left:250px;top:117px" width="20" height="18" viewBox="0 0 20 18"><path d="M3 15.4 L4.2 12.6 L10.8 6 L12.6 7.8 L6 14.4 Z" fill="#3a3a3a" stroke="#111" stroke-width="0.8"/><path d="M2.2 16.2 L3.6 13 L5.6 15 Z" fill="#e8a020" stroke="#7a5008" stroke-width="0.5"/><path d="M4.4 13.6 L10.4 7.6" stroke="#b8b8b8" stroke-width="0.8"/><path d="M10 4.6 L14 8.6 M11.6 5.8 L15 2.4 C16.4 1 18.4 3 17 4.4 L13.4 8" stroke="#111" stroke-width="2.3" fill="none" stroke-linecap="round"/></svg>
<svg class="abs" style="left:12px;top:146px" width="68" height="18" viewBox="1088 227 68 18"><path d="M1090.6 235.6 L1097 229.6 V233 H1101.6 V238.2 H1097 V241.6 Z" fill="#fff" stroke="#000" stroke-width="1.3" stroke-linejoin="miter"/><path d="M1126.6 235.6 L1120.2 229.6 V233 H1115.6 V238.2 H1120.2 V241.6 Z" fill="#fff" stroke="#a8a8a8" stroke-width="1.3"/><path d="M1136.4 236 L1144 228.8 L1151.6 236 M1138.4 235 V242.6 H1149.6 V235 M1147.6 230 V233" stroke="#000" stroke-width="1.4" fill="none"/><rect x="1141.6" y="237" width="4.6" height="5.6" fill="#000"/></svg>
<div class="fld" style="left:81px;top:147px;width:164px;height:23px"></div>
<span class="t" style="left:85.5px;top:154px;font-size:10.7px;letter-spacing:-0.02px">Farben</span>
<div class="abs" style="left:228px;top:149px;width:16px;height:20px;background:#f2f2f2;border-right:1px solid #777;border-bottom:1px solid #777;border-left:1px solid #e8e8e8"></div>
<svg class="abs" style="left:232px;top:157px" width="8" height="5" viewBox="0 0 8 5"><path d="M0.4 0.4 H7.6 L4 4.6 Z" fill="#000"/></svg>
<svg class="abs" style="left:253px;top:147px" width="17" height="16" viewBox="0 0 17 16"><path d="M6 1 L15.6 8 L6 15 Z" fill="#000"/><rect x="1" y="3.4" width="8" height="9.6" fill="#dfeaff" stroke="#1a3a8a" stroke-width="1"/><path d="M2.6 6 H7.4 M2.6 8.2 H7.4 M2.6 10.4 H7.4" stroke="#1a3a8a" stroke-width="0.9"/></svg>
<div class="abs" style="left:6px;top:171px;width:267px;height:1px;background:#9c9c9c"></div>
<div class="abs" style="left:6px;top:172px;width:251px;height:275px;background:#fff;overflow:hidden">
<div class="sw" style="left:3px;top:-10px;background:#ff7f00"></div>
<div class="sw" style="left:55px;top:-10px;background:#d26304"></div>
<div class="sw" style="left:107px;top:-10px;background:#a14706"></div>
<div class="sw" style="left:159px;top:-10px;background:#5e2d04"></div>
<div class="sw" style="left:3px;top:42px;background:#fff8dc"></div>
<div class="sw" style="left:55px;top:42px;background:#ffeba0"></div>
<div class="sw" style="left:107px;top:42px;background:#ffe062"></div>
<div class="sw" style="left:159px;top:42px;background:#ffd42e"></div>
<div class="sw" style="left:3px;top:94px;background:#ffbf00"></div>
<div class="sw" style="left:55px;top:94px;background:#d4a006"></div>
<div class="sw" style="left:107px;top:94px;background:#9e7408"></div>
<div class="sw" style="left:159px;top:94px;background:#644a08"></div>
<div class="sw" style="left:3px;top:146px;background:#ffffe0"></div>
<div class="sw" style="left:55px;top:146px;background:#ffffa8"></div>
<div class="sw" style="left:107px;top:146px;background:#ffff66"></div>
<div class="sw" style="left:159px;top:146px;background:#ffff33"></div>
<div class="sw" style="left:3px;top:198px;background:#ffff00"></div>
<div class="sw" style="left:55px;top:198px;background:#d4d400"></div>
<div class="sw" style="left:107px;top:198px;background:#9e9e08"></div>
<div class="sw" style="left:159px;top:198px;background:#646408"></div>
<div class="sw" style="left:3px;top:250px;background:#eaffd8"></div>
<div class="sw" style="left:55px;top:250px;background:#d0ffa2"></div>
<div class="sw" style="left:107px;top:250px;background:#b4ff60"></div>
<div class="sw" style="left:159px;top:250px;background:#9afa2c"></div>
</div>
<div class="abs" style="left:257px;top:172px;width:16px;height:275px;background:#f0f0f0"></div>
<div class="abs" style="left:257px;top:233px;width:15px;height:17px;background:#cdcdcd"></div>
<svg class="abs" style="left:257px;top:172px" width="16" height="275" viewBox="0 0 16 275"><path d="M4 10 L8 6 L12 10" stroke="#404040" stroke-width="1.6" fill="none"/><path d="M4 264 L8 268 L12 264" stroke="#404040" stroke-width="1.6" fill="none"/></svg>
<div class="abs" style="left:6px;top:447px;width:267px;height:8px;background:#f0f0f0"></div>
<div class="abs" style="left:6px;top:451px;width:267px;height:2px;background:#6b6b6b"></div>
<div class="hdr" style="top:455px;height:17px"></div>
<svg class="abs" style="left:12px;top:460px" width="10" height="8" viewBox="0 0 10 8"><path d="M1.2 1 H8.8 L5 7 Z" fill="#000"/></svg>
<span class="t" style="left:28px;top:458px;font-size:11.9px;letter-spacing:0.2px">Komponenten</span>
<div class="abs" style="left:257px;top:457px;width:13px;height:13px;background:#f4f4f4;border:1px solid #9a9a9a"></div>
<svg class="abs" style="left:257px;top:457px" width="13" height="13" viewBox="0 0 13 13"><path d="M4 4.5 L9 9 M9 4.5 L4 9" stroke="#000" stroke-width="1.3"/></svg>
<div class="abs" style="left:8px;top:474px;width:66px;height:71px;background:#f6f6f6;border:1px solid #8a8a8a"></div>
<svg class="abs" style="left:16px;top:484px" width="50" height="52" viewBox="0 0 50 52"><path d="M3.6 9 L19.3 22.5 L17.7 47.5 L8.3 30.8 Z" fill="#b9b9b9"/><path d="M19.3 22.5 L46.3 14 L40 36 L17.7 47.5 Z" fill="#a9a9a9"/><path d="M3.6 9 L28 3.8 L46.3 14 L19.3 22.5 Z" fill="#fff"/><path d="M6.6 12.4 L20.6 24.4 L43.4 17.2 M20.8 24.6 L19.6 44.4" stroke="#7c7c7c" stroke-width="1.1" fill="none"/><path d="M8.6 9.6 L27.6 5.6 L42 13.6" stroke="#8a8a8a" stroke-width="0.9" fill="none"/><path d="M3.6 9 L28 3.8 L46.3 14 L40 36 L17.7 47.5 L8.3 30.8 Z M3.6 9 L19.3 22.5 L46.3 14 M19.3 22.5 L17.7 47.5" fill="none" stroke="#d2d2d2" stroke-width="2" stroke-linejoin="round"/></svg>
<div class="fld" style="left:77px;top:474px;width:167px;height:19px;background:#fafafa"></div>
<div class="fld" style="left:77px;top:495px;width:167px;height:49px;background:#fafafa"></div>
<svg class="abs" style="left:254px;top:476px" width="12" height="16" viewBox="0 0 12 16"><rect x="0.5" y="0.5" width="11" height="7" fill="#fff" stroke="#555" stroke-width="0.8"/><path d="M2.6 2.4 H9.4 L6 6.4 Z" fill="#000"/><rect x="0" y="8" width="12" height="8" fill="#000"/><path d="M2.5 12 H9.5 M6 9.6 V10.8 M6 13.2 V14.4" stroke="#fff" stroke-width="1.1"/></svg>
<div class="abs" style="left:6px;top:547px;width:267px;height:1px;background:#a6a6a6"></div>
<div class="abs" style="left:6px;top:574px;width:267px;height:1px;background:#e2e2e2"></div>
<div class="abs" style="left:6px;top:554px;width:66px;height:21px;background:#fbfbfb;border:1px solid #e4e4e4;border-right:2px solid #6e6e6e;border-bottom:none"></div>
<span class="t" style="left:13px;top:558px;font-size:10.7px;letter-spacing:-0.14px">Auswählen</span>
<div class="abs" style="left:73px;top:556px;width:61.5px;height:17px;border-right:2px solid #6e6e6e;border-top:1px solid #e6e6e6"></div>
<span class="t" style="left:76.4px;top:560px;font-size:10.7px;letter-spacing:-0.01px">Bearbeiten</span>
<div class="abs" style="left:135.5px;top:556px;width:49.200000000000045px;height:17px;border-right:2px solid #6e6e6e;border-top:1px solid #e6e6e6"></div>
<span class="t" style="left:138.9px;top:560px;font-size:10.7px;letter-spacing:0.14px">Statistik</span>
<div class="abs" style="left:9px;top:579px;width:30px;height:20px;background:#f8f8f8;border-right:1px solid #a0a0a0;border-bottom:1px solid #a0a0a0;border-top:1px solid #ececec;border-left:1px solid #ececec"></div>
<div class="abs" style="left:42px;top:579px;width:21px;height:20px;background:#f8f8f8;border-right:1px solid #a0a0a0;border-bottom:1px solid #a0a0a0;border-top:1px solid #ececec;border-left:1px solid #ececec"></div>
<div class="abs" style="left:63px;top:579px;width:16px;height:20px;background:#f8f8f8;border-right:1px solid #a0a0a0;border-bottom:1px solid #a0a0a0;border-top:1px solid #ececec;border-left:1px solid #ececec"></div>
<div class="abs" style="left:252px;top:579px;width:20px;height:20px;background:#f8f8f8;border-right:1px solid #a0a0a0;border-bottom:1px solid #a0a0a0;border-top:1px solid #ececec;border-left:1px solid #ececec"></div>
<svg class="abs" style="left:9px;top:579px" width="70" height="20" viewBox="1085 660 70 20"><g fill="none" stroke="#222" stroke-width="1"><rect x="1093.5" y="664.5" width="3.6" height="3.6"/><rect x="1093.5" y="671" width="3.6" height="3.6"/></g><path d="M1099 665.4 H1103 M1099 667.6 H1102 M1099 672 H1103 M1099 674.2 H1102" stroke="#222" stroke-width="1"/><path d="M1104.6 670 H1108.6 L1106.6 672.4 Z" fill="#000"/><path d="M1121.4 670 L1129 662.8 L1136.6 670 M1123.4 669 V676.6 H1134.6 V669 M1132.6 664 V667" stroke="#000" stroke-width="1.4" fill="none"/><rect x="1126.6" y="671" width="4.6" height="5.6" fill="#000"/><path d="M1142.6 665.4 H1152.4 L1147.5 671 Z" fill="#000"/></svg>
<div class="abs" style="left:81px;top:579px;width:169px;height:20px;background:#fff;border:1px solid #9a9a9a"></div>
<div class="abs" style="left:231px;top:579px;width:1px;height:20px;background:#8a8a8a"></div>
<span class="t" style="left:84.5px;top:584px;font-size:10.4px;color:#686868;letter-spacing:0.03px">3D Warehouse</span>
<svg class="abs" style="left:233px;top:581px" width="15" height="16" viewBox="0 0 15 16"><circle cx="8.6" cy="6.4" r="3.6" fill="#fff" stroke="#000" stroke-width="1.3"/><path d="M6 9.4 L2.4 13.4" stroke="#000" stroke-width="1.6"/></svg>
<svg class="abs" style="left:254px;top:581px" width="17" height="16" viewBox="0 0 17 16"><path d="M6 1 L15.6 8 L6 15 Z" fill="#000"/><rect x="1" y="3.4" width="8" height="9.6" fill="#dfeaff" stroke="#1a3a8a" stroke-width="1"/><path d="M2.6 6 H7.4 M2.6 8.2 H7.4 M2.6 10.4 H7.4" stroke="#1a3a8a" stroke-width="0.9"/></svg>
<div class="abs" style="left:6px;top:603px;width:267px;height:1px;background:#979797"></div>
<div class="abs" style="left:6px;top:604px;width:267px;height:1px;background:#dcdcdc"></div>
<div class="abs" style="left:6px;top:605px;width:267px;height:54px;background:#fff;overflow:hidden">
<div class="abs" style="left:8px;top:9.0px;width:60px;height:60px;background:#fff;border:1px solid #8a8a8a"></div>
<div class="abs" style="left:6px;top:10.4px;width:60px;height:60px;background:#fff;border:1px solid #8a8a8a"></div>
<div class="abs" style="left:4px;top:11.8px;width:60px;height:60px;background:#fff;border:1px solid #8a8a8a"></div>
<svg class="abs" style="left:12px;top:24px" width="44" height="36" viewBox="0 0 44 36"><path d="M2 30 L9 23 L34 25 L29 33 Z" fill="#8c8c8c"/><path d="M5 7 L10 3.6 L16 5 L20 8 L20 30 L9 27 Z" fill="#8cb4dc" stroke="#4a78a8" stroke-width="0.8"/><path d="M12 11 L33 4.6 L32 28 L13 34 Z" fill="#c39a62" stroke="#7a5a30" stroke-width="0.8"/></svg>
<span class="t" style="left:72px;top:14px;font-size:9.8px;font-weight:bold;letter-spacing:-0.05px">Beispielsatz mit Komponenten</span>
</div>
</div>

<div id="statusbar" class="abs">
<svg class="abs" style="left:4px;top:6px" width="80" height="17" viewBox="0 0 80 17">
<circle cx="9" cy="8" r="6.6" fill="#fdfdfd" stroke="#b9b9b9" stroke-width="1.2"/>
<circle cx="9" cy="6.4" r="2.3" fill="#a9a9a9"/><path d="M8 8 H10 L9.6 12 H8.4 Z" fill="#a9a9a9"/>
<circle cx="39" cy="8" r="6.6" fill="#fff" stroke="#111" stroke-width="1.7"/>
<circle cx="39" cy="4.7" r="1.5" fill="#111"/><path d="M36.6 7 H41.4 V8.2 H40.2 V12 H37.8 V8.2 H36.6 Z" fill="#111"/>
<circle cx="68.5" cy="8" r="6.8" fill="#f4f4f4" stroke="#a2a2a2" stroke-width="1.2"/>
<circle cx="68.5" cy="5.8" r="2.4" fill="#9a9a9a"/><path d="M63.8 12.6 Q64 8.8 68.5 8.8 Q73 8.8 73.2 12.6 Q68.5 15.6 63.8 12.6Z" fill="#9a9a9a"/>
</svg>
<div class="abs" style="left:92px;top:10px;width:1px;height:9px;background:#8a8a8a"></div>
<span class="t" style="left:103px;top:9px;font-size:13px;letter-spacing:-0.01px">Zum Rotieren ziehen. Umschalttaste = Handfunktion, Strg = Schwerpunkt aufheben.</span>
<div class="abs" style="left:1063px;top:10px;width:1px;height:10px;background:#9a9a9a"></div>
<span class="t" style="left:1075.5px;top:9px;font-size:13.05px">Maßangaben</span>
<div class="abs" style="left:1161px;top:3px;width:200px;height:23px;background:#f9f9f9;border:1px solid #abbccd"></div>
</div>

</body>
</html>
